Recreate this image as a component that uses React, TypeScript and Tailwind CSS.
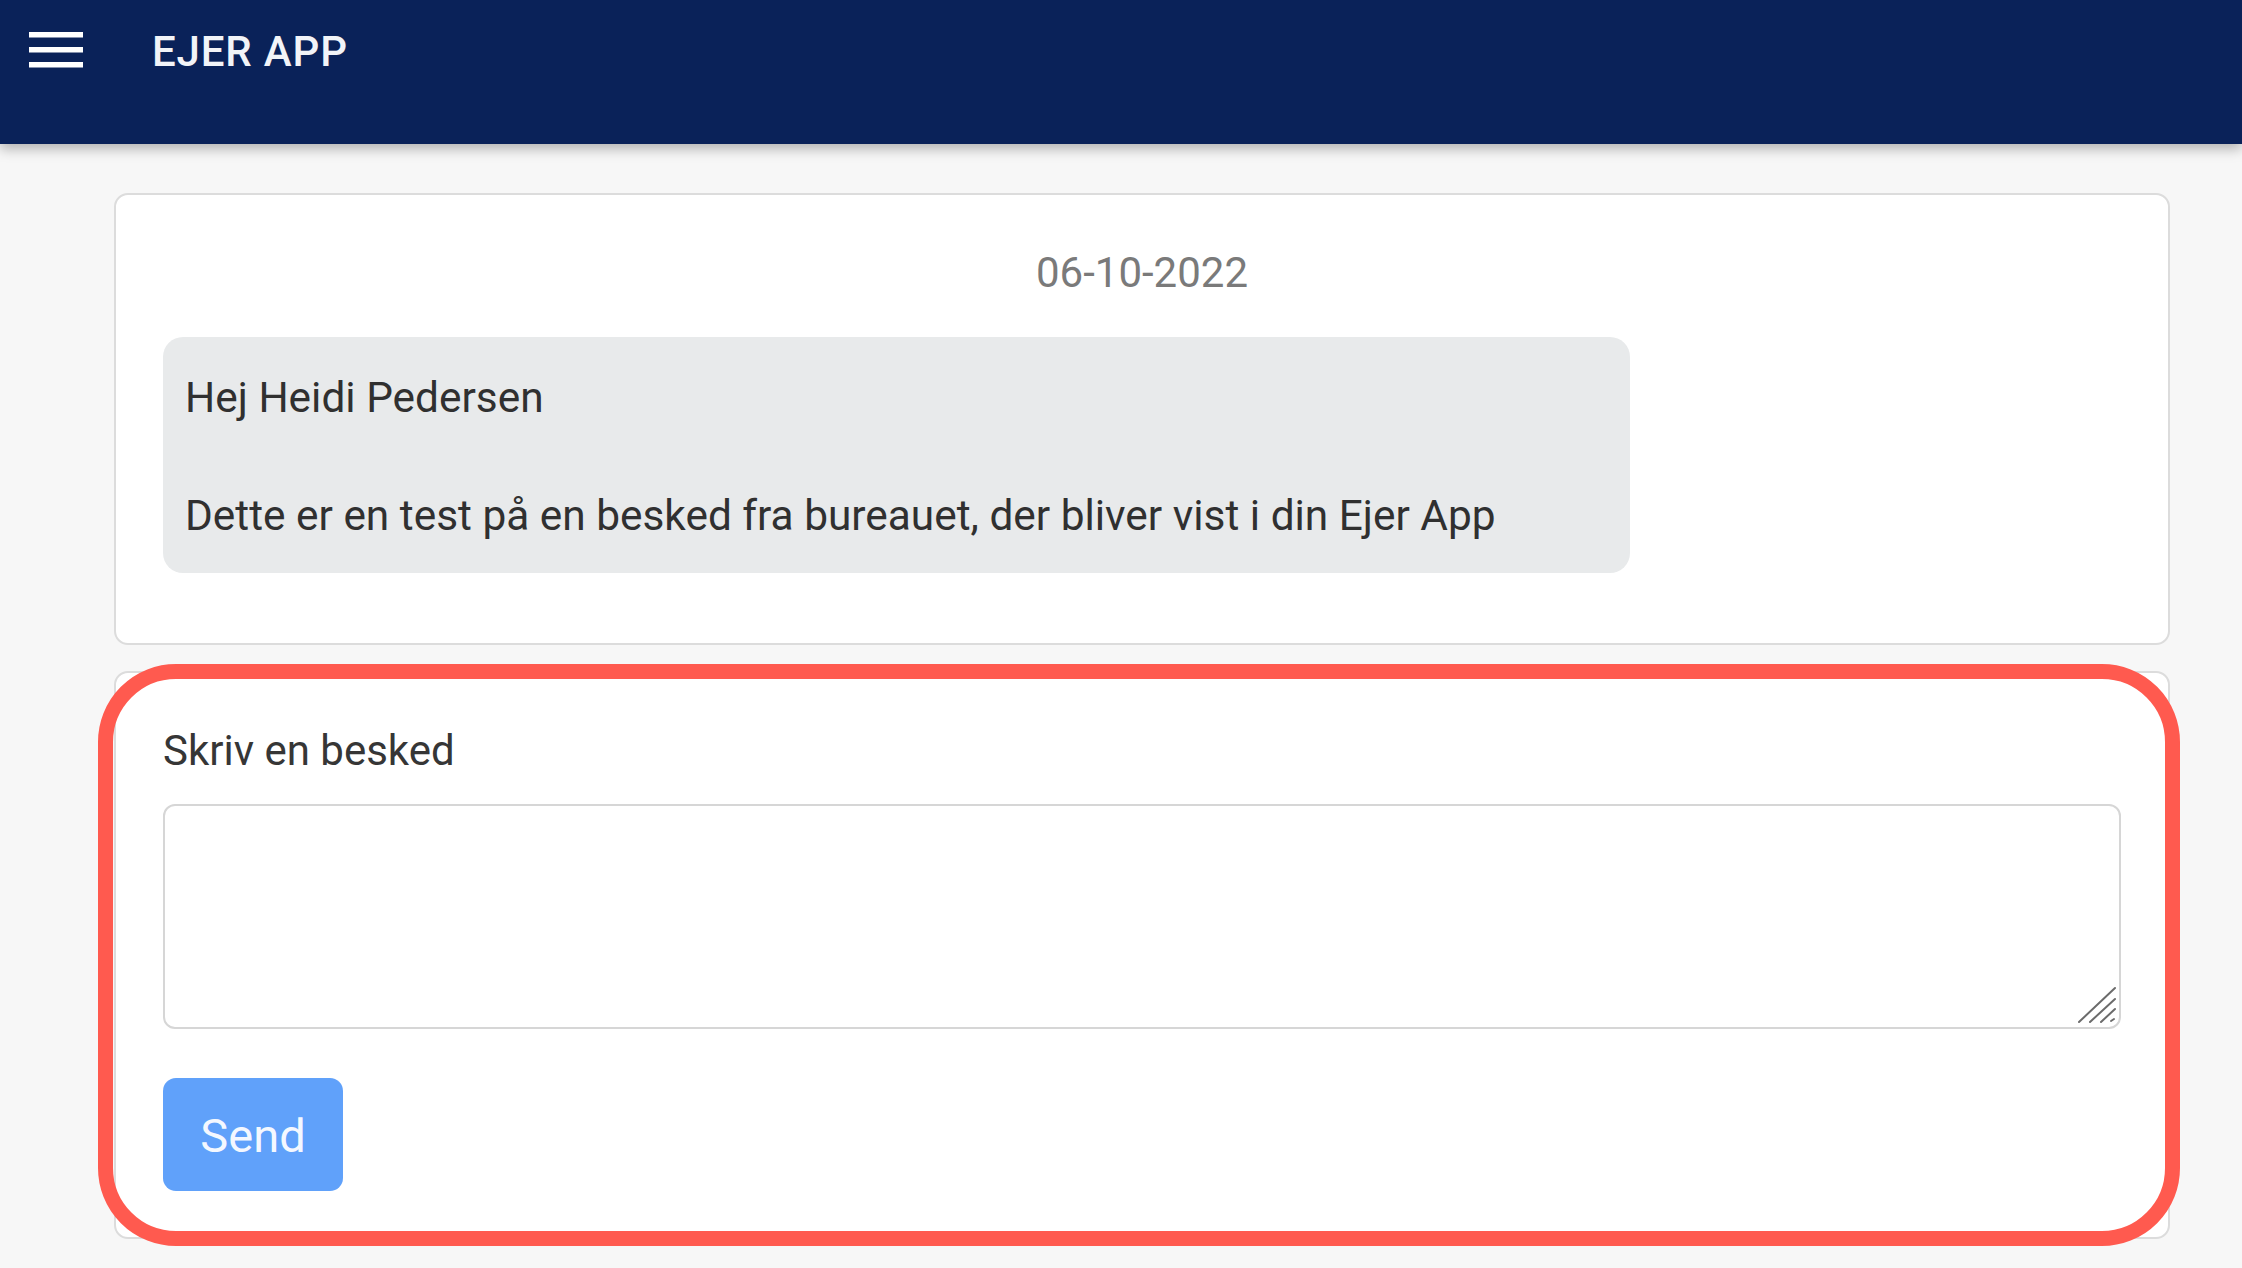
import React from "react";

const ResizeGrip = () => (
  <svg
    className="pointer-events-none absolute bottom-[5px] right-[5px]"
    width="38"
    height="38"
    viewBox="0 0 38 38"
    fill="none"
    stroke="#6b6b6b"
    strokeWidth="2"
    strokeLinecap="round"
  >
    <line x1="1" y1="36" x2="37" y2="2" />
    <line x1="12" y1="36" x2="37" y2="13" />
    <line x1="23" y1="36" x2="37" y2="23" />
    <line x1="33" y1="35" x2="36" y2="33" />
  </svg>
);

const App = () => {
  const [text, setText] = React.useState("");

  return (
    <div className="min-h-screen bg-[#f7f7f7] font-['Roboto',sans-serif]">
      {/* App bar */}
      <header className="relative z-10 h-[144px] bg-[#0a2259] shadow-[0_5px_12px_rgba(0,0,0,0.28)]">
        <div className="flex h-[100px] items-center pl-[29px]">
          <svg width="54" height="36" viewBox="0 0 54 36" fill="#ffffff">
            <rect x="0" y="0" width="54" height="5.5" />
            <rect x="0" y="15" width="54" height="5.5" />
            <rect x="0" y="30" width="54" height="5.5" />
          </svg>
          <span className="ml-[69px] mt-[2px] text-[42px] font-medium tracking-[0.02em] text-[#f2f4f8]">EJER APP</span>
        </div>
      </header>

      <main className="pl-[114px] pr-[72px] pt-[49px] pb-[28px]">
        {/* Message thread */}
        <div className="rounded-[14px] border-2 border-[#dcdcdc] bg-white px-[47px] pt-[46px] pb-[70px]">
          <div className="text-center text-[42px] leading-[63px] text-[#7a7a7a]">06-10-2022</div>
          <div className="mt-[33px] w-[1467px] rounded-[20px] bg-[#e8eaeb] pl-[22px] pt-[31px] pb-[28px] text-[42.4px] leading-[59px] text-[#303030]">
            <p>Hej Heidi Pedersen</p>
            <p className="mt-[59px]">Dette er en test på en besked fra bureauet, der bliver vist i din Ejer App</p>
          </div>
        </div>

        {/* Reply form */}
        <div className="relative mt-[26px] rounded-[14px] border-2 border-[#dcdcdc] bg-white px-[47px] pt-[48px] pb-[46px]">
          <label className="block text-[42px] leading-[59px] text-[#363636]">Skriv en besked</label>
          <div className="relative mt-[24px]">
            <textarea
              value={text}
              onChange={(e) => setText(e.target.value)}
              className="block h-[225px] w-full resize-none rounded-[12px] border-2 border-[#d6d6d6] bg-white p-[16px] text-[42px] text-[#303030] outline-none"
            />
            <ResizeGrip />
          </div>
          <button
            type="button"
            className="mt-[49px] flex h-[113px] w-[180px] items-center justify-center rounded-[13px] bg-[#60a1fa] pt-[3px] text-[47px] text-[#f4f8ff]"
          >
            Send
          </button>

          {/* highlight annotation */}
          <div className="pointer-events-none absolute -bottom-[9px] -left-[18px] -right-[12px] -top-[9px] rounded-[78px] border-[15px] border-[#ff5a4f]" />
        </div>
      </main>
    </div>
  );
};

export default App;
